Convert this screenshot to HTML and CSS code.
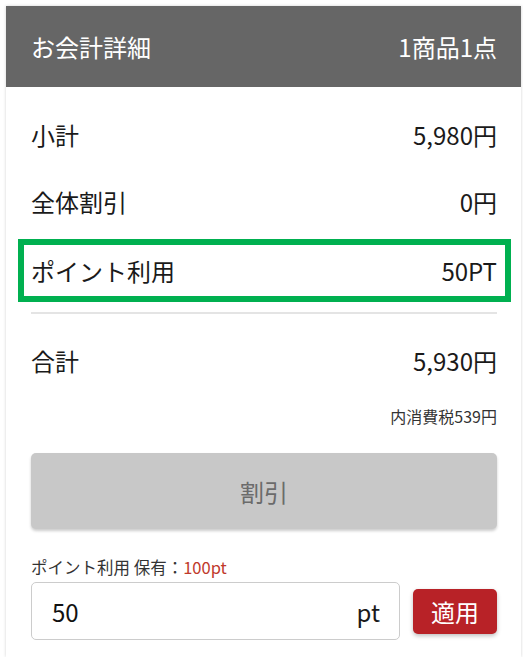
FILE: index.html
```html
<!DOCTYPE html>
<html lang="ja">
<head>
    <meta charset="UTF-8">
    <meta name="viewport" content="width=device-width, initial-scale=1.0">
    <title>お会計詳細</title>
    <link rel="stylesheet" href="styles.css">
</head>
<body>

    <div class="summary">
        <!-- Header -->
        <div class="summary-head">
            <span>お会計詳細</span>
            <span>1商品1点</span>
        </div>

        <div class="summary-body">
            <div class="row">
                <span>小計</span>
                <span>5,980円</span>
            </div>
            <div class="row">
                <span>全体割引</span>
                <span>0円</span>
            </div>
            <div class="row row-marked">
                <span>ポイント利用</span>
                <span>50PT</span>
            </div>

            <hr class="divider">

            <div class="row">
                <span>合計</span>
                <span>5,930円</span>
            </div>
            <div class="tax">内消費税539円</div>

            <button class="discount-btn" disabled>割引</button>

            <!-- Point form -->
            <div class="point-label">ポイント利用 保有：<span class="point-have">100pt</span></div>
            <div class="point-form">
                <div class="point-input">
                    <input type="text" value="50">
                    <span>pt</span>
                </div>
                <button class="apply-btn">適用</button>
            </div>
        </div>
    </div>

</body>
</html>
```

FILE: styles.css
```css
* {
    margin: 0;
    padding: 0;
    box-sizing: border-box;
    font-family: "Noto Sans CJK JP", "Noto Sans", sans-serif;
}

body {
    background-color: #fff;
    color: #1a1a1a;
}

.summary {
    margin: 6px 2px 0 6px;
    background: #fff;
    box-shadow: 0 0 3px rgba(0, 0, 0, 0.18);
    min-height: 651px;
}

/* Header bar */
.summary-head {
    display: flex;
    justify-content: space-between;
    align-items: center;
    height: 81px;
    padding: 0 24px 0 25px;
    background-color: #666;
    color: #fff;
    font-size: 24px;
}

.summary-body {
    padding: 14px 24px 0 25px;
}

.row {
    display: flex;
    justify-content: space-between;
    align-items: center;
    height: 67px;
    font-size: 24px;
}

.row-marked {
    height: 63px;
    margin: 4px -14px 0 -13px;
    padding: 0 8px 0 7px;
    border: 6px solid #00b050;
}

.divider {
    border: none;
    border-top: 2px solid #e4e4e4;
    margin: 10px 0 13px;
}

.tax {
    text-align: right;
    font-size: 16px;
    line-height: 24px;
    color: #333;
    margin-top: 10px;
}

.discount-btn {
    display: block;
    width: 100%;
    height: 76px;
    margin-top: 25px;
    background-color: #c8c8c8;
    color: #6b6b6b;
    border: none;
    border-radius: 5px;
    box-shadow: 0 2px 3px rgba(0, 0, 0, 0.2);
    font-size: 24px;
}

.point-label {
    margin-top: 26px;
    font-size: 16.5px;
    line-height: 24px;
    color: #333;
}

.point-have {
    color: #c0392b;
}

.point-form {
    display: flex;
    align-items: center;
    gap: 13px;
    margin-top: 3px;
}

.point-input {
    flex: 1;
    display: flex;
    align-items: center;
    height: 58px;
    padding: 0 19px 0 20px;
    border: 1px solid #ccc;
    border-radius: 5px;
    font-size: 24px;
}

.point-input input {
    flex: 1;
    min-width: 0;
    border: none;
    outline: none;
    font-size: 24px;
    color: #111;
    background: transparent;
}

.apply-btn {
    width: 84px;
    height: 45px;
    background-color: #b82227;
    color: #fff;
    border: none;
    border-radius: 5px;
    box-shadow: 0 2px 4px rgba(0, 0, 0, 0.25);
    font-size: 24px;
}
```
